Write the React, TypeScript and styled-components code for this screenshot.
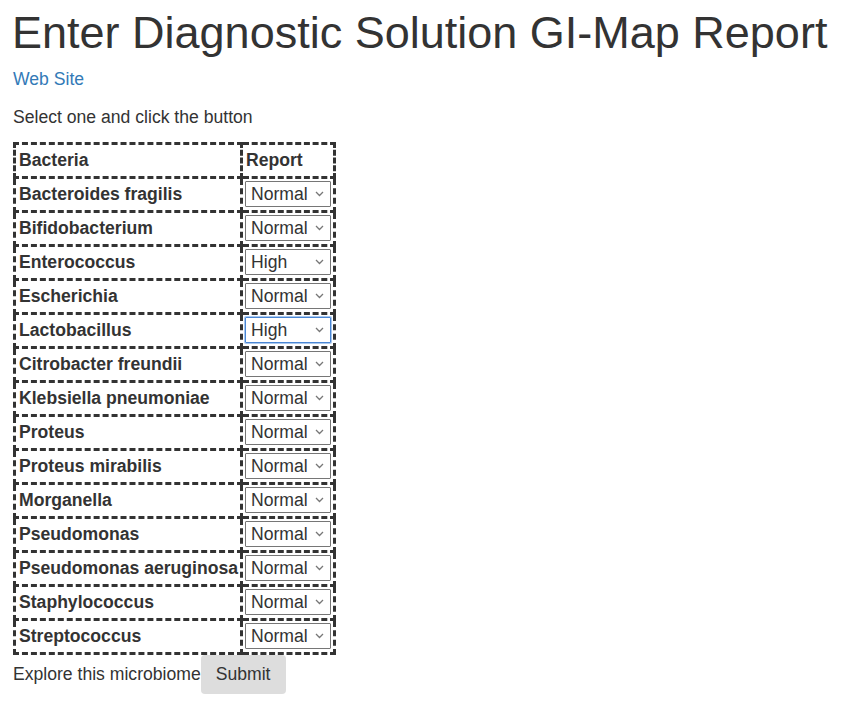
import React, { useState } from "react";
import styled, { createGlobalStyle } from "styled-components";

const GlobalStyle = createGlobalStyle`
    body {
        margin: 0;
        font-family: "Liberation Sans", Arial, sans-serif;
        font-size: 17.6px;
        color: #333;
        background: #fff;
    }
`;

const Page = styled.div`
    padding: 8px 13px 10px;
`;

const Title = styled.h1`
    margin: 0 0 0 -1px;
    font-size: 45px;
    font-weight: 400;
    line-height: 49px;
    white-space: nowrap;
`;

const Link = styled.a`
    display: block;
    margin-top: 10px;
    color: #337ab7;
    text-decoration: none;
    line-height: 25px;
`;

const Prompt = styled.p`
    margin: 13px 0 12px;
    line-height: 25px;
`;

const Table = styled.table`
    border-collapse: collapse;
    border: 3px dashed #333;
`;

const Cell = styled.td`
    border: 3px dashed #333;
    padding: 3px 2px 3px 3px;
    line-height: 25px;
    font-weight: bold;
    text-align: left;
    vertical-align: middle;
    white-space: nowrap;
`;

const PickCell = styled.td`
    border: 3px dashed #333;
    padding: 2px 2px 3px;
    vertical-align: middle;
`;

const HeadCell = styled(Cell)`
    padding-left: 3px;
`;

const PickWrap = styled.div`
    position: relative;
    width: 86px;
    height: 26px;
`;

const Select = styled.select<{ $focused?: boolean }>`
    display: block;
    appearance: none;
    -webkit-appearance: none;
    width: 86px;
    height: 26px;
    margin: 0;
    font-family: "Liberation Sans", Arial, sans-serif;
    font-size: 17.6px;
    color: #333;
    background: #fff;
    border: 1px solid ${({ $focused }) => ($focused ? "#4a86d4" : "#767676")};
    box-shadow: ${({ $focused }) => ($focused ? "0 0 0 1px #a8c8ef" : "none")};
    outline: none;
    border-radius: 1px;
    padding: 0 0 0 5px;
`;

const Chevron = styled.svg`
    position: absolute;
    right: 7px;
    top: 10px;
    width: 9px;
    height: 6px;
    pointer-events: none;
`;

const Footer = styled.div`
    display: flex;
    align-items: center;
`;

const FooterText = styled.span`
    line-height: 25px;
`;

const Button = styled.button`
    font-family: "Liberation Sans", Arial, sans-serif;
    font-size: 17.6px;
    color: #333;
    background: #ddd;
    border: none;
    border-radius: 4px;
    height: 39px;
    padding: 0 15px;
`;

const rows: [string, string][] = [
    ["Bacteroides fragilis", "Normal"],
    ["Bifidobacterium", "Normal"],
    ["Enterococcus", "High"],
    ["Escherichia", "Normal"],
    ["Lactobacillus", "High"],
    ["Citrobacter freundii", "Normal"],
    ["Klebsiella pneumoniae", "Normal"],
    ["Proteus", "Normal"],
    ["Proteus mirabilis", "Normal"],
    ["Morganella", "Normal"],
    ["Pseudomonas", "Normal"],
    ["Pseudomonas aeruginosa", "Normal"],
    ["Staphylococcus", "Normal"],
    ["Streptococcus", "Normal"],
];

const App = () => {
    const [values, setValues] = useState(rows.map((r) => r[1]));

    return (
        <Page>
            <GlobalStyle />
            <Title>Enter Diagnostic Solution GI-Map Report</Title>
            <Link href="#">Web Site</Link>
            <Prompt>Select one and click the button</Prompt>
            <Table>
                <thead>
                    <tr>
                        <HeadCell as="th">Bacteria</HeadCell>
                        <HeadCell as="th">Report</HeadCell>
                    </tr>
                </thead>
                <tbody>
                    {rows.map(([name], i) => (
                        <tr key={name}>
                            <Cell>{name}</Cell>
                            <PickCell>
                                <PickWrap>
                                    <Select
                                        $focused={i === 4}
                                        value={values[i]}
                                        onChange={(e) => {
                                            const next = [...values];
                                            next[i] = e.target.value;
                                            setValues(next);
                                        }}
                                    >
                                        <option>Normal</option>
                                        <option>High</option>
                                        <option>Low</option>
                                    </Select>
                                    <Chevron viewBox="0 0 9 6">
                                        <path d="M1 1l3.5 3.5L8 1" fill="none" stroke="#777" strokeWidth="1.3" />
                                    </Chevron>
                                </PickWrap>
                            </PickCell>
                        </tr>
                    ))}
                </tbody>
            </Table>
            <Footer>
                <FooterText>Explore this microbiome</FooterText>
                <Button>Submit</Button>
            </Footer>
        </Page>
    );
};

export default App;
